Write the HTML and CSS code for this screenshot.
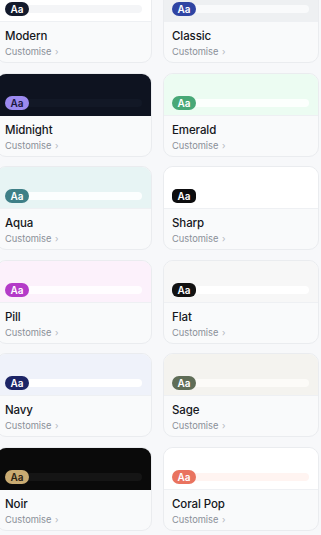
FILE: index.html
```html
<!DOCTYPE html>
<html lang="en">
<head>
    <meta charset="UTF-8">
    <meta name="viewport" content="width=device-width, initial-scale=1.0">
    <title>Themes</title>
    <link rel="stylesheet" href="styles.css">
</head>
<body>
    <div class="theme-grid">
        <div class="theme-card modern">
            <div class="preview"><span class="badge">Aa</span><span class="bar"></span></div>
            <div class="info"><div class="name">Modern</div><div class="customise">Customise <span class="chev">›</span></div></div>
        </div>
        <div class="theme-card classic">
            <div class="preview"><span class="badge">Aa</span><span class="bar"></span></div>
            <div class="info"><div class="name">Classic</div><div class="customise">Customise <span class="chev">›</span></div></div>
        </div>
        <div class="theme-card midnight">
            <div class="preview"><span class="badge">Aa</span><span class="bar"></span></div>
            <div class="info"><div class="name">Midnight</div><div class="customise">Customise <span class="chev">›</span></div></div>
        </div>
        <div class="theme-card emerald">
            <div class="preview"><span class="badge">Aa</span><span class="bar"></span></div>
            <div class="info"><div class="name">Emerald</div><div class="customise">Customise <span class="chev">›</span></div></div>
        </div>
        <div class="theme-card aqua">
            <div class="preview"><span class="badge">Aa</span><span class="bar"></span></div>
            <div class="info"><div class="name">Aqua</div><div class="customise">Customise <span class="chev">›</span></div></div>
        </div>
        <div class="theme-card sharp">
            <div class="preview"><span class="badge">Aa</span><span class="bar"></span></div>
            <div class="info"><div class="name">Sharp</div><div class="customise">Customise <span class="chev">›</span></div></div>
        </div>
        <div class="theme-card pill">
            <div class="preview"><span class="badge">Aa</span><span class="bar"></span></div>
            <div class="info"><div class="name">Pill</div><div class="customise">Customise <span class="chev">›</span></div></div>
        </div>
        <div class="theme-card flat">
            <div class="preview"><span class="badge">Aa</span><span class="bar"></span></div>
            <div class="info"><div class="name">Flat</div><div class="customise">Customise <span class="chev">›</span></div></div>
        </div>
        <div class="theme-card navy">
            <div class="preview"><span class="badge">Aa</span><span class="bar"></span></div>
            <div class="info"><div class="name">Navy</div><div class="customise">Customise <span class="chev">›</span></div></div>
        </div>
        <div class="theme-card sage">
            <div class="preview"><span class="badge">Aa</span><span class="bar"></span></div>
            <div class="info"><div class="name">Sage</div><div class="customise">Customise <span class="chev">›</span></div></div>
        </div>
        <div class="theme-card noir">
            <div class="preview"><span class="badge">Aa</span><span class="bar"></span></div>
            <div class="info"><div class="name">Noir</div><div class="customise">Customise <span class="chev">›</span></div></div>
        </div>
        <div class="theme-card coral">
            <div class="preview"><span class="badge">Aa</span><span class="bar"></span></div>
            <div class="info"><div class="name">Coral Pop</div><div class="customise">Customise <span class="chev">›</span></div></div>
        </div>
    </div>
</body>
</html>
```

FILE: styles.css
```css
:root {
    --page-bg: #f7f8fa;
    --card-border: #eaecef;
    --info-bg: #f9fafb;
    --text-primary: #15171c;
    --text-secondary: #8a8f98;
    --radius: 10px;
}

* {
    box-sizing: border-box;
}

body {
    margin: 0;
    background: var(--page-bg);
    font-family: Inter, "Noto Sans", sans-serif;
    color: var(--text-primary);
    overflow: hidden;
}

.theme-grid {
    display: grid;
    grid-template-columns: 1fr 1fr;
    column-gap: 11px;
    row-gap: 9.6px;
    width: 323px;
    margin: -21px 0 0 -4px;
}

.theme-card {
    height: 84px;
    border: 1px solid var(--card-border);
    border-radius: var(--radius);
    overflow: hidden;
    background: var(--info-bg);
    display: flex;
    flex-direction: column;
}

.preview {
    height: 42px;
    flex-shrink: 0;
    display: flex;
    align-items: flex-end;
    padding: 0 9px 5px 8px;
    border-bottom: 1px solid #eef0f3;
    background: #fff;
}

.badge {
    height: 14px;
    padding: 0 5.5px;
    border-radius: 7px;
    font-size: 10px;
    font-weight: 600;
    line-height: 14px;
    color: #fff;
    background: #111827;
    position: relative;
    z-index: 1;
}

.bar {
    flex: 1;
    height: 8px;
    margin: 0 0 3px -3px;
    border-radius: 4px;
    background: #fff;
}

.info {
    flex: 1;
    padding: 7px 8px 0;
}

.name {
    font-size: 11.5px;
    font-weight: 500;
    line-height: 14px;
    letter-spacing: -0.1px;
}

.customise {
    margin-top: 3px;
    font-size: 9.3px;
    line-height: 12px;
    color: var(--text-secondary);
}

.chev {
    margin-left: 1px;
    font-size: 9px;
    color: #b3b7be;
}

/* theme previews */
.modern .preview { background: #fff; }
.modern .badge { background: #131a2c; }
.modern .bar { background: #f4f5f7; }

.classic .preview { background: #eef0f2; }
.classic .badge { background: #2f44a3; }
.classic .bar { background: #f9fafb; }

.midnight .preview { background: #0e1320; border-bottom-color: #0e1320; }
.midnight .badge { background: #9c8af0; color: #1b1740; }
.midnight .bar { background: #121826; }

.emerald .preview { background: #ecfcf2; }
.emerald .badge { background: #48a877; }
.emerald .bar { background: #fcfffd; }

.aqua .preview { background: #e7f4f4; }
.aqua .badge { background: #3e7f87; }
.aqua .bar { background: #fcfefe; }

.sharp .preview { background: #fff; }
.sharp .badge { background: #0d0d0f; border-radius: 5px; }
.sharp .bar { background: #fff; }

.pill .preview { background: #fcf1fb; }
.pill .badge { background: #b43bc8; }
.pill .bar { background: #fffdff; }

.flat .preview { background: #f7f7f7; }
.flat .badge { background: #121212; border-radius: 6px; }
.flat .bar { background: #fff; }

.navy .preview { background: #eff2fa; }
.navy .badge { background: #1d2566; }
.navy .bar { background: #fff; }

.sage .preview { background: #f4f3ef; }
.sage .badge { background: #5f6d57; }
.sage .bar { background: #fcfbf8; }

.noir .preview { background: #0a0a0a; border-bottom-color: #0a0a0a; }
.noir .badge { background: #c9ab72; color: #2b2212; }
.noir .bar { background: #151515; }

.coral .preview { background: #fff; }
.coral .badge { background: #e9735f; }
.coral .bar { background: #fff4f1; }
```
